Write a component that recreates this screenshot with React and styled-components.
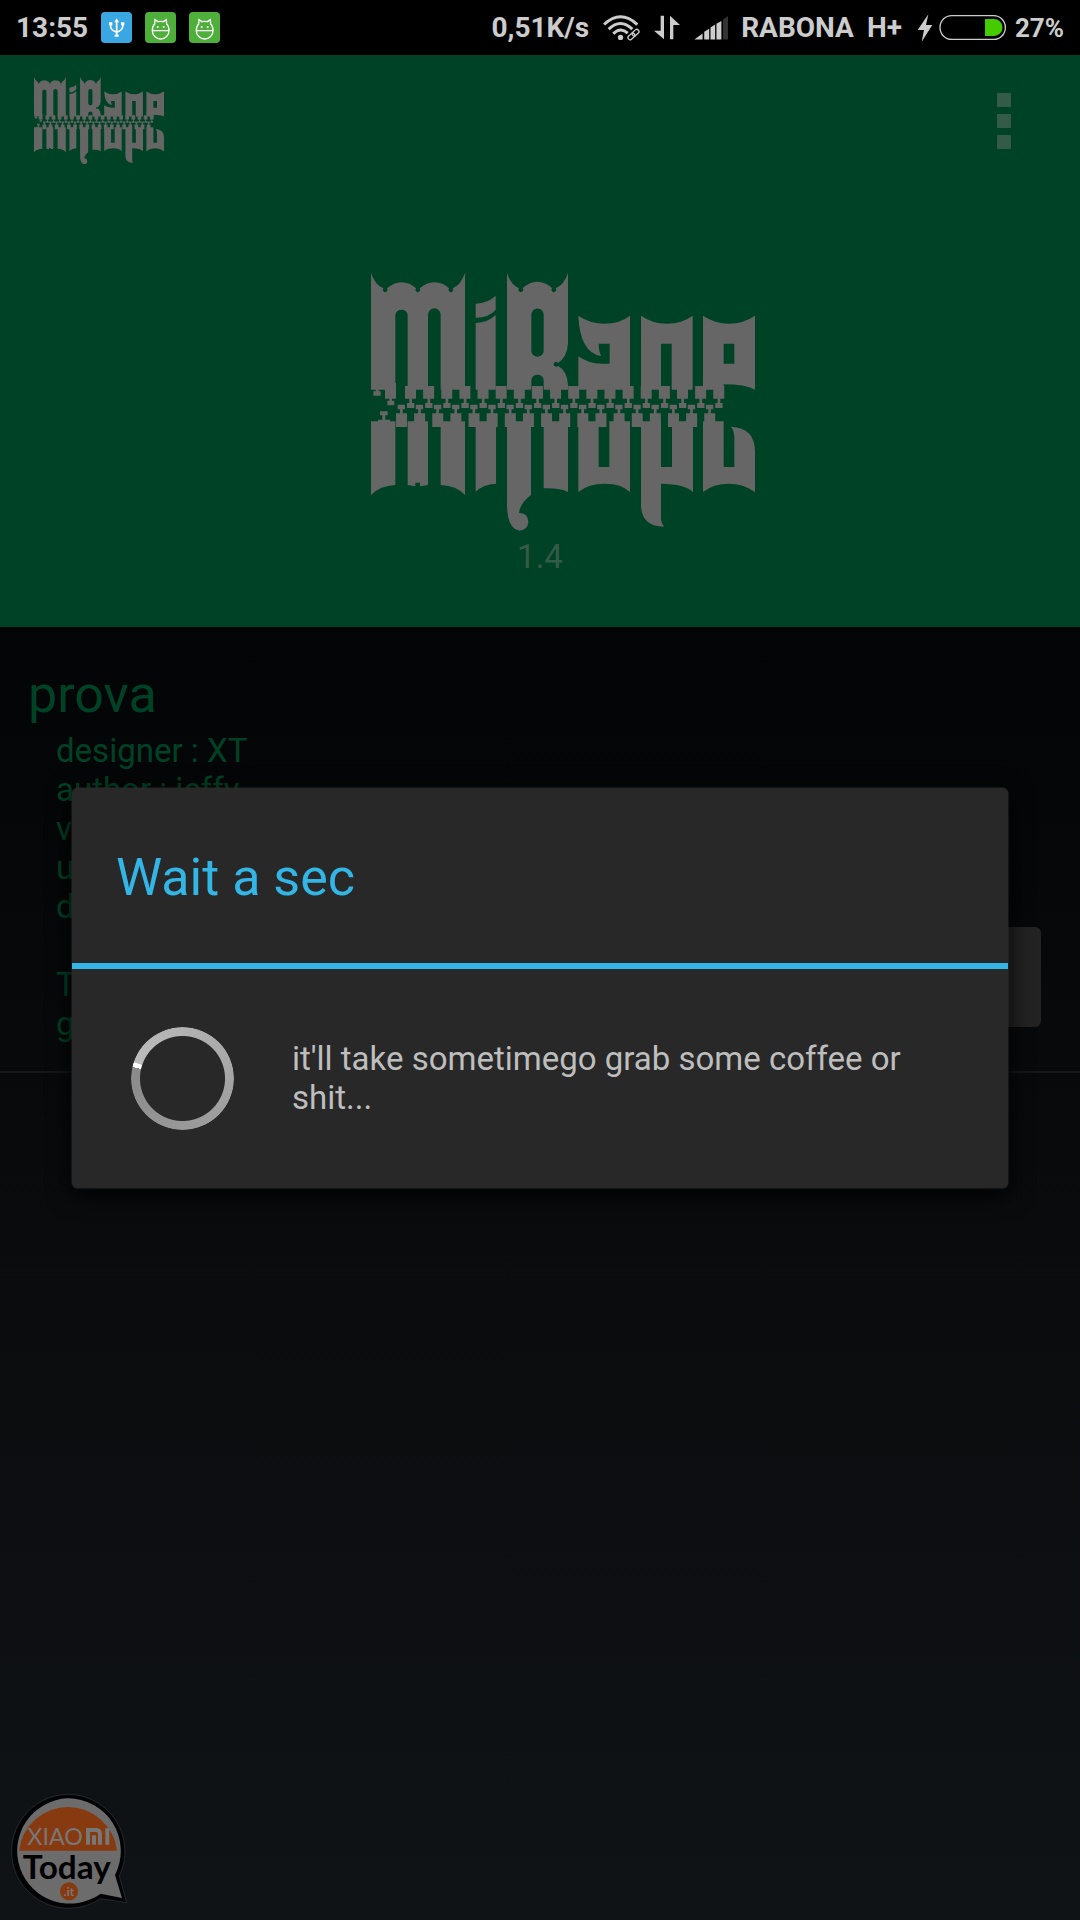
import React from "react";
import styled, { createGlobalStyle } from "styled-components";

/* Start page styling */
const GlobalStyle = createGlobalStyle`
  * {
    box-sizing: border-box;
  }

  body {
    margin: 0;
    background-color: #000;
    font-family: Roboto, sans-serif;
  }

  h1, h2, p, ul {
    margin: 0;
    padding: 0;
    font-weight: 400;
  }

  svg {
    display: block;
  }
`;

const Screen = styled.div`
  position: relative;
  min-height: 100vh;
  display: flex;
  flex-direction: column;
`;

const StatusBar = styled.div`
  height: 55px;
  padding: 0 16px;
  display: flex;
  align-items: center;
  justify-content: space-between;
  background-color: #000;
  color: #ccc;
  font-size: 28px;
  font-weight: 700;
`;

const StatusGroup = styled.div`
  display: flex;
  align-items: center;
  gap: 13px;
`;

const Battery = styled.div`
  display: flex;
  align-items: center;
  gap: 8px;
  margin-left: 2px;
  font-size: 26px;
`;

const Window = styled.div`
  position: relative;
  flex: 1;
  display: flex;
  flex-direction: column;
  background-image: linear-gradient(#000, #040506 35%, #101316);
`;

const Header = styled.header`
  background-color: #004226;
`;

const Toolbar = styled.div`
  display: flex;
  align-items: center;
  justify-content: space-between;
  height: 131px;
  padding: 0 65px 0 34px;
`;

const MenuButton = styled.button`
  display: flex;
  flex-direction: column;
  gap: 7px;
  padding: 4px;
  border: 0;
  background: none;
`;

const MenuDot = styled.span`
  width: 14px;
  height: 14px;
  background-color: #335b47;
`;

const Hero = styled.div`
  display: flex;
  flex-direction: column;
  align-items: center;
  padding: 87px 0 50px;
`;

const HeroLogo = styled.div`
  padding-left: 46px;
`;

const Version = styled.p`
  margin-top: 6px;
  color: #335b47;
  font-size: 33px;
  line-height: 40px;
`;

const ThemeItem = styled.section`
  display: flex;
  justify-content: space-between;
  align-items: flex-end;
  padding: 38px 39px 44px 28px;
  border-bottom: 2px solid #16181a;
  color: #004226;
`;

const ThemeText = styled.div`
  margin-bottom: -16px;
`;

const ThemeName = styled.h2`
  font-size: 52px;
  line-height: 60px;
`;

const ThemeDetails = styled.ul`
  list-style: none;
  padding: 6px 0 0 28px;
  font-size: 33px;
  line-height: 39px;
`;

const ThemeLine = styled.li`
  min-height: 39px;
`;

const ApplyButton = styled.button`
  width: 160px;
  height: 100px;
  border: 0;
  border-radius: 6px;
  background-color: #232323;
`;

const Overlay = styled.div`
  position: absolute;
  inset: 0;
  display: flex;
  align-items: center;
  padding: 0 72px;
`;

const Dialog = styled.div`
  flex: 1;
  border-radius: 6px;
  background-color: #282828;
  box-shadow: 0 0 2px #444, 0 6px 24px #000;
`;

const DialogTitle = styled.h1`
  padding: 60px 44px 55px;
  border-bottom: 6px solid #33b5e5;
  color: #33b5e5;
  font-size: 52px;
  line-height: 60px;
`;

const DialogBody = styled.div`
  display: flex;
  align-items: center;
  gap: 58px;
  padding: 58px 59px;
`;

const Spinner = styled.div`
  flex: none;
  width: 103px;
  height: 103px;
  border-radius: 50%;
  background-image: conic-gradient(
    from 283deg,
    #fff 5deg,
    #bcbcbc 6deg,
    #8a8a8a 360deg
  );
  mask-image: radial-gradient(transparent 42px, #000 43px);
`;

const Message = styled.p`
  color: #bebebe;
  font-size: 33px;
  line-height: 39px;
`;

const Watermark = styled.div`
  position: absolute;
  left: 0;
  bottom: 0;
`;
/* End page styling */

/* Zip teeth along the middle of the logo */
const upperTeeth = Array.from({ length: 18 }, (_, idx) => 151 + idx * 54.4);
const lowerTeeth = Array.from({ length: 18 }, (_, idx) => 124 + idx * 54.4);

const Logo = ({ width }) => (
  <svg
    width={width}
    viewBox="33 40 1152 775"
    fill="#666"
    role="img"
    aria-label="MiRape"
  >
    <path d="M33 40Q45 76 70 86A7 7 0 1 0 81 86Q102 68 124 68Q150 68 168 86A7 7 0 1 0 179 86Q200 68 222 68Q250 68 267 86A7 7 0 1 0 278 86Q303 76 315 40V390H242V165A19 19 0 0 0 204 165V390H143V165A19 19 0 0 0 106 165V390H33Z" />
    <path d="M347 132Q385 130 407 108V150Q385 175 347 174ZM347 190Q385 188 407 166V390H347Z" />
    <path
      fillRule="evenodd"
      d="M441 40Q453 76 477 86A7 7 0 1 0 488 86Q508 66 531 66Q558 66 576 86A7 7 0 1 0 587 86Q612 76 624 40V250Q622 292 594 310A7 7 0 1 0 594 318Q622 334 624 375V390H551V360A19 19 0 0 0 514 360V390H441ZM514 165A18 18 0 0 1 551 165V273A18 18 0 0 1 514 273Z"
    />
    <path d="M655 168Q690 192 733 192Q780 192 810 168V390H655V290Q685 312 725 312H749V252H716Q716 275 724 289Q660 280 655 168Z" />
    <path d="M843 168Q878 192 920 192Q965 192 998 168V390H935V252H903V390H843Z" />
    <path
      fillRule="evenodd"
      d="M1029 168Q1065 192 1107 192Q1150 192 1185 168V390Q1155 374 1091 374V390H1029ZM1091 252V312H1123V252Z"
    />
    <path d="M33 485H106V676Q60 678 33 706ZM143 485H204V676L180 680V669H166V680L143 676ZM242 485H315V706Q290 678 242 676Z" />
    <path d="M347 485H408V672Q370 674 347 696ZM441 485H513V706Q480 730 477 760Q505 760 505 788Q502 813 478 813Q442 808 441 735ZM551 485H624V697Q600 684 551 686Z" />
    <path d="M655 485H716V622H748V485H810V697Q785 672 733 672Q685 672 655 697Z" />
    <path d="M843 485H903V622H936V485H999V697Q975 673 903 672V780Q905 790 912 801Q843 800 843 735Z" />
    <path d="M1029 485H1091V622H1123V550Q1125 515 1113 501Q1185 505 1185 575V697Q1150 672 1107 672Q1060 672 1029 697Z" />
    <path d="M75 370H108V417H96V423H103V437H82V423H88V417H75ZM40 395H47V388H56V395H62V408H40ZM60 455H83V467H76V480H90V487H54V480H67V467H60Z" />
    {upperTeeth.map(x => (
      <path
        key={"upper-" + x}
        d={`M${x - 16} 379h33v38h-12v13h7v15h-22v-15h7v-13h-13z`}
      />
    ))}
    {lowerTeeth.map(x => (
      <path
        key={"lower-" + x}
        d={`M${x - 11} 435h22v14h-7v12h13v41h-33v-41h12v-12h-7z`}
      />
    ))}
  </svg>
);

const UsbIcon = () => (
  <svg width="31" height="31" viewBox="0 0 93 93">
    <rect width="93" height="93" rx="12" fill="#3ba7e2" />
    <g fill="none" stroke="#fff" strokeWidth="5">
      <path d="M47 26V72M29 36V45Q30 54 47 61M65 36V45Q64 54 47 61" />
    </g>
    <path
      fill="#fff"
      d="M47 19L54 31H40ZM24 31H34V40H24ZM60 31H70V40H60ZM41 68H53V74H41Z"
    />
  </svg>
);

const BugIcon = () => (
  <svg width="31" height="31" viewBox="0 0 93 93">
    <rect width="93" height="93" rx="12" fill="#4eb03b" />
    <g fill="none" stroke="#fff" strokeWidth="4">
      <path d="M22 56A25 25 0 0 0 72 56ZM22 56Q22 42 29 36L30 23L39 29Q47 27 55 29L64 23L65 36Q72 42 72 56" />
    </g>
    <circle cx="38" cy="45" r="3" fill="#fff" />
    <circle cx="56" cy="45" r="3" fill="#fff" />
  </svg>
);

const WifiIcon = () => (
  <svg width="38" height="28" viewBox="375 40 115 85">
    <g fill="none" stroke="#ccc" strokeWidth="9">
      <path d="M381 72Q431 25 482 72M395 86Q431 52 467 86M409 100Q431 78 453 98" />
    </g>
    <circle cx="431" cy="111" r="8" fill="#ccc" />
    <g fill="#000" stroke="#ccc" strokeWidth="4" transform="rotate(-42 470 102)">
      <rect x="450" y="96" width="23" height="13" rx="6" />
      <rect x="467" y="96" width="23" height="13" rx="6" fill="none" />
    </g>
  </svg>
);

const TrafficIcon = () => (
  <svg width="28" height="25" viewBox="520 45 84 75" fill="#ccc">
    <path d="M543 47H553V118L523 92H543ZM571 118V47L601 75H581V118Z" />
  </svg>
);

const SignalIcon = () => (
  <svg width="34" height="25" viewBox="638 46 103 74" fill="#ccc">
    <path d="M639 119L664 101V119ZM669 96L684 87V119H669ZM688 83L702 74V119H688ZM706 72L721 63V119H706Z" />
    <path fill="#333" d="M726 59L741 49V119H726Z" />
  </svg>
);

const BatteryIcon = () => (
  <svg width="90" height="28" viewBox="414 42 270 84">
    <path fill="#ccc" d="M448 43L416 90H435L428 125L460 75H441Z" />
    <rect
      x="483"
      y="47"
      width="196"
      height="71"
      rx="35"
      fill="none"
      stroke="#ccc"
      strokeWidth="4"
    />
    <path fill="#4c0" d="M618 57H645A25 25 0 0 1 645 108H618Z" />
  </svg>
);

const Badge = () => (
  <svg width="140" height="140" viewBox="0 0 420 420">
    <path
      d="M205 43A171 171 0 0 1 358 288L380 368L301 356A171 171 0 1 1 205 43Z"
      fill="#020304"
      stroke="#34383b"
      strokeWidth="2"
    />
    <path
      d="M203 55A158 158 0 0 1 345 285L366 354L302 341A158 158 0 1 1 203 55Z"
      fill="#6c6c6c"
    />
    <path d="M57 212A148 148 0 0 1 351 212Z" fill="#873a10" />
    <text
      x="82"
      y="194"
      fill="#777"
      fontFamily="Lato, sans-serif"
      fontSize="70"
    >
      XIAO
    </text>
    {/* Mi mark */}
    <path
      d="M264 194V150H289Q300 150 300 162V194M282 166V194M322 145V194"
      fill="none"
      stroke="#777"
      strokeWidth="12"
    />
    <text
      x="68"
      y="298"
      fill="#000"
      fontFamily="Lato, sans-serif"
      fontWeight="700"
      fontSize="100"
    >
      Today
    </text>
    <circle cx="207" cy="334" r="27" fill="#873a10" />
    <text
      x="207"
      y="347"
      fill="#777"
      textAnchor="middle"
      fontFamily="Lato, sans-serif"
      fontWeight="700"
      fontSize="36"
    >
      .it
    </text>
  </svg>
);

const details = ["designer : XT", "author : jeffy", "v", "u", "d", "", "T", "g"];

const App = () => (
  <>
    <GlobalStyle />
    <Screen>
      <StatusBar>
        <StatusGroup>
          <span>13:55</span>
          <UsbIcon />
          <BugIcon />
          <BugIcon />
        </StatusGroup>
        <StatusGroup>
          <span>0,51K/s</span>
          <WifiIcon />
          <TrafficIcon />
          <SignalIcon />
          <span>RABONA</span>
          <span>H+</span>
          <Battery>
            <BatteryIcon />
            <span>27%</span>
          </Battery>
        </StatusGroup>
      </StatusBar>

      <Window>
        <Header>
          <Toolbar>
            <Logo width={130} />
            <MenuButton aria-label="Menu">
              <MenuDot />
              <MenuDot />
              <MenuDot />
            </MenuButton>
          </Toolbar>
          <Hero>
            <HeroLogo>
              <Logo width={384} />
            </HeroLogo>
            <Version>1.4</Version>
          </Hero>
        </Header>

        <ThemeItem>
          <ThemeText>
            <ThemeName>prova</ThemeName>
            <ThemeDetails>
              {details.map((line, idx) => (
                <ThemeLine key={"line-" + idx}>{line}</ThemeLine>
              ))}
            </ThemeDetails>
          </ThemeText>
          <ApplyButton aria-label="Apply" />
        </ThemeItem>

        <Overlay>
          <Dialog role="dialog" aria-labelledby="dialog-title">
            <DialogTitle id="dialog-title">Wait a sec</DialogTitle>
            <DialogBody>
              <Spinner role="progressbar" aria-labelledby="dialog-title" />
              <Message>
                it'll take sometimego grab some coffee or shit...
              </Message>
            </DialogBody>
          </Dialog>
        </Overlay>

        <Watermark>
          <Badge />
        </Watermark>
      </Window>
    </Screen>
  </>
);

export default App;
